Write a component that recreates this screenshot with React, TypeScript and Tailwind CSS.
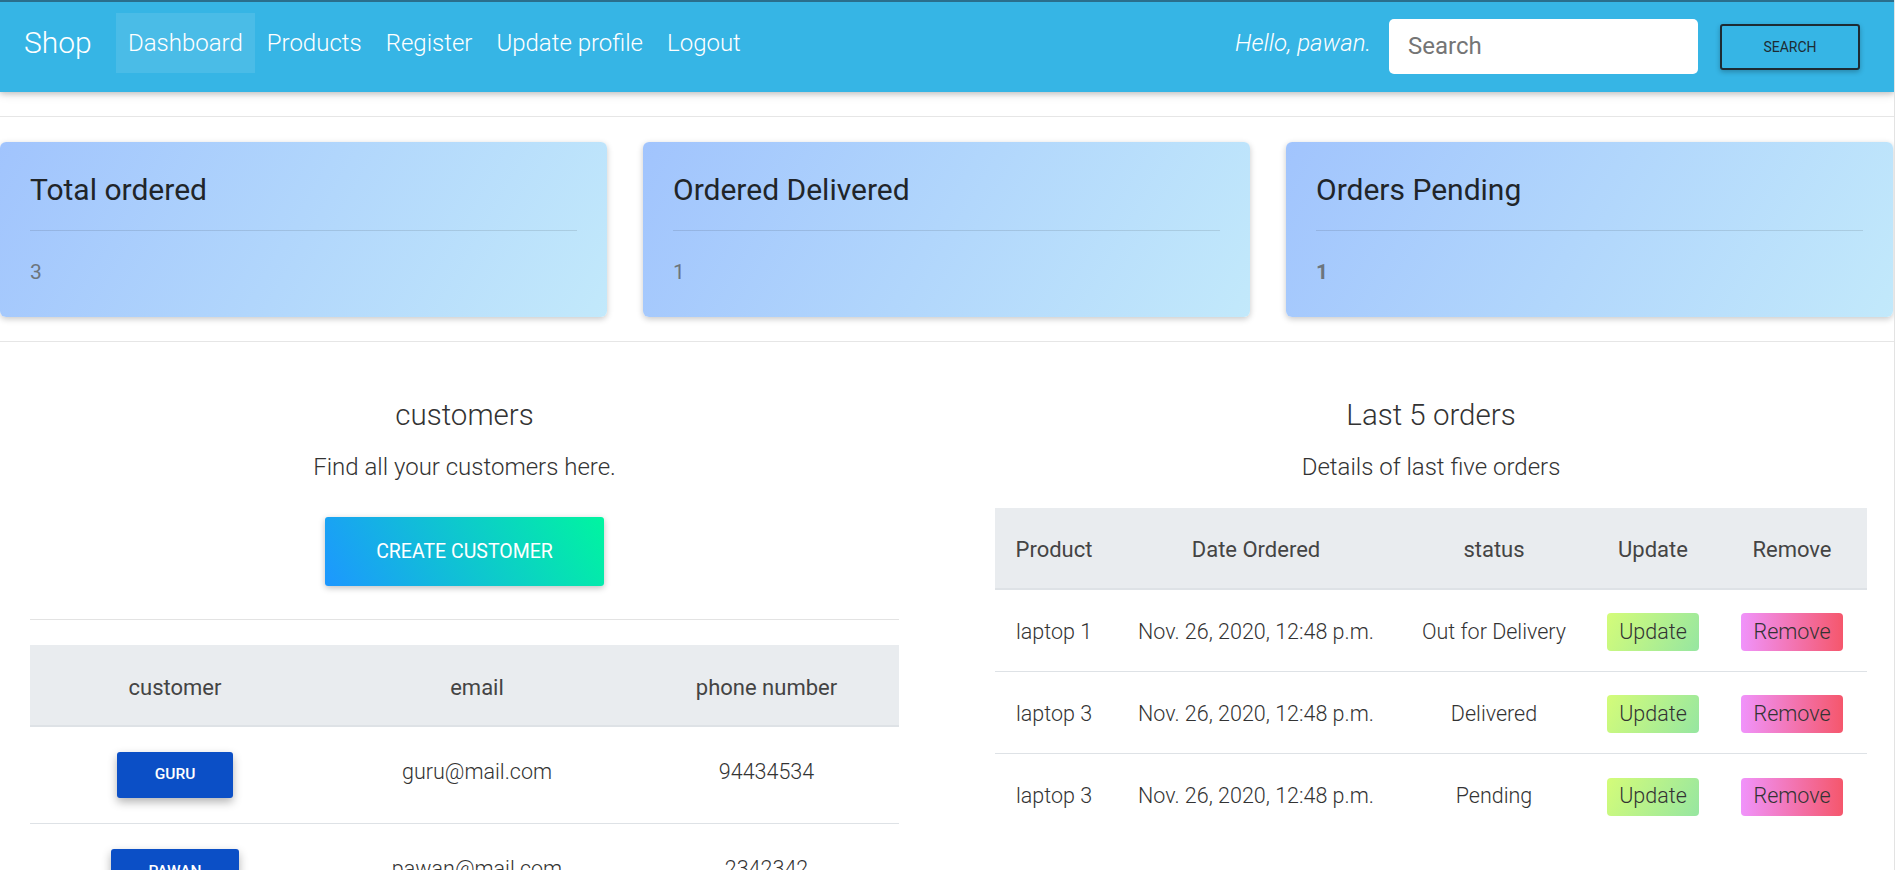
import React from "react";

const font = { fontFamily: "Roboto, 'Noto Sans', Arial, sans-serif" };

function NavLink({ label, active }: { label: string; active?: boolean }) {
  return (
    <a
      className={
        "flex items-center h-[60px] px-[12px] text-[24px] font-light text-white " +
        (active ? "bg-[rgba(255,255,255,0.1)]" : "")
      }
    >
      {label}
    </a>
  );
}

function StatCard({ title, value, bold }: { title: string; value: string; bold?: boolean }) {
  return (
    <div className="rounded-[6px] bg-[linear-gradient(120deg,#a1c4fd_0%,#c2e9fb_100%)] shadow-[0_2px_6px_rgba(0,0,0,0.22)] px-[30px] pt-[30px] pb-[32px] h-[175px]">
      <div className="text-[30px] leading-[36px] text-[#212529]">{title}</div>
      <div className="mt-[22px] h-px bg-[rgba(0,0,0,0.1)]" />
      <div
        className={
          "mt-[26px] text-[21px] leading-[30px] text-[#6c757d] " + (bold ? "font-bold" : "font-normal")
        }
      >
        {value}
      </div>
    </div>
  );
}

const customers = [
  { name: "GURU", email: "guru@mail.com", phone: "94434534", w: "w-[116px]" },
  { name: "PAWAN", email: "pawan@mail.com", phone: "2342342", w: "w-[128px]" },
];

const orders = [
  { product: "laptop 1", status: "Out for Delivery" },
  { product: "laptop 3", status: "Delivered" },
  { product: "laptop 3", status: "Pending" },
];

export default function App() {
  return (
    <div style={font} className="w-[1895px] min-h-[870px] bg-white border-r border-[#e3e3e3] overflow-hidden">
      {/* Navbar */}
      <nav className="relative z-10 h-[92px] bg-[#36b5e5] border-t-2 border-[#2a6e8c] flex items-center shadow-[0_2px_5px_rgba(0,0,0,0.16),0_2px_10px_rgba(0,0,0,0.12)]">
        <div className="w-[116px] pl-[24px] text-[30px] font-light text-white -mt-[9px]">Shop</div>
        <div className="flex items-center -mt-[9px]">
          <NavLink label="Dashboard" active />
          <NavLink label="Products" />
          <NavLink label="Register" />
          <NavLink label="Update profile" />
          <NavLink label="Logout" />
        </div>
        <div className="ml-auto flex items-center pr-[34px]">
          <span className="text-[24px] italic font-light text-white mr-[18px] -mt-[8px]">Hello, pawan.</span>
          <div className="w-[309px] h-[55px] bg-white rounded-[5px] flex items-center px-[19px] text-[24px] text-[#757575] -mt-[2px]">
            Search
          </div>
          <button className="ml-[22px] w-[140px] h-[46px] border-2 border-[#1d2b33] rounded-[3px] text-[14px] text-[#1d2b33] shadow-[0_2px_5px_rgba(0,0,0,0.25)]">
            SEARCH
          </button>
        </div>
      </nav>

      {/* Stats */}
      <div className="mt-[24px] h-px bg-[#e6e6e6]" />
      <div className="grid grid-cols-3 gap-[36px] pt-[25px] pb-[24px] pr-px">
        <StatCard title="Total ordered" value="3" />
        <StatCard title="Ordered Delivered" value="1" />
        <StatCard title="Orders Pending" value="1" bold />
      </div>
      <div className="h-px bg-[#e6e6e6]" />

      {/* Lower section */}
      <div className="flex pl-[30px] gap-[96px] pt-[55px]">
        {/* Customers */}
        <div className="w-[869px] flex flex-col items-center">
          <div className="text-[29.5px] leading-[36px] font-light text-[#333]">customers</div>
          <div className="mt-[18px] text-[24px] leading-[33px] font-light text-[#333]">Find all your customers here.</div>
          <button className="mt-[33px] w-[279px] h-[69px] rounded-[3px] bg-[linear-gradient(60deg,#1d97ff_0%,#00f5a0_100%)] text-white text-[19.5px] shadow-[0_2px_6px_rgba(0,0,0,0.25)]">
            CREATE CUSTOMER
          </button>
          <div className="mt-[33px] w-full h-px bg-[#e3e3e3]" />
          <div className="mt-[25px] w-full">
            <div className="flex h-[82px] items-center bg-[#e9ecef] border-b-2 border-[#dee2e6] text-[22px] text-[#444] pt-[4px]">
              <div className="w-[290px] text-center">customer</div>
              <div className="w-[314px] text-center">email</div>
              <div className="w-[265px] text-center">phone number</div>
            </div>
            {customers.map((c) => (
              <div key={c.name} className="flex h-[97px] items-center border-b border-[#dee2e6] text-[21.5px] font-light text-[#333]">
                <div className="w-[290px] flex justify-center">
                  <button className={"h-[46px] rounded-[3px] bg-[#0b4fc6] text-white text-[15.5px] font-medium shadow-[0_4px_10px_rgba(0,0,0,0.3)] " + c.w}>
                    {c.name}
                  </button>
                </div>
                <div className="w-[314px] text-center -mt-[6px]">{c.email}</div>
                <div className="w-[265px] text-center -mt-[6px]">{c.phone}</div>
              </div>
            ))}
          </div>
        </div>

        {/* Orders */}
        <div className="w-[872px] flex flex-col items-center">
          <div className="text-[29.5px] leading-[36px] font-light text-[#333]">Last 5 orders</div>
          <div className="mt-[18px] text-[24px] leading-[33px] font-light text-[#333]">Details of last five orders</div>
          <div className="mt-[24px] w-full">
            <div className="flex h-[82px] items-center bg-[#e9ecef] border-b-2 border-[#dee2e6] text-[22px] text-[#444] pt-[3px]">
              <div className="w-[118px] text-center">Product</div>
              <div className="w-[286px] text-center">Date Ordered</div>
              <div className="w-[190px] text-center">status</div>
              <div className="w-[128px] text-center">Update</div>
              <div className="w-[150px] text-center">Remove</div>
            </div>
            {orders.map((o, i) => (
              <div
                key={i}
                className={
                  "flex h-[82px] items-center text-[21.5px] font-light text-[#333] pt-[3px] " +
                  (i < orders.length - 1 ? "border-b border-[#dee2e6]" : "")
                }
              >
                <div className="w-[118px] text-center">{o.product}</div>
                <div className="w-[286px] text-center">Nov. 26, 2020, 12:48 p.m.</div>
                <div className="w-[190px] text-center">{o.status}</div>
                <div className="w-[128px] flex justify-center">
                  <button className="h-[38px] px-[12px] rounded-[4px] bg-[linear-gradient(120deg,#d4fc79_0%,#96e6a1_100%)] text-[#333] text-[21.5px] font-light">
                    Update
                  </button>
                </div>
                <div className="w-[150px] flex justify-center">
                  <button className="h-[38px] px-[12px] rounded-[4px] bg-[linear-gradient(to_right,#f093fb_0%,#f5576c_100%)] text-[#333] text-[21.5px] font-light">
                    Remove
                  </button>
                </div>
              </div>
            ))}
          </div>
        </div>
      </div>
    </div>
  );
}
